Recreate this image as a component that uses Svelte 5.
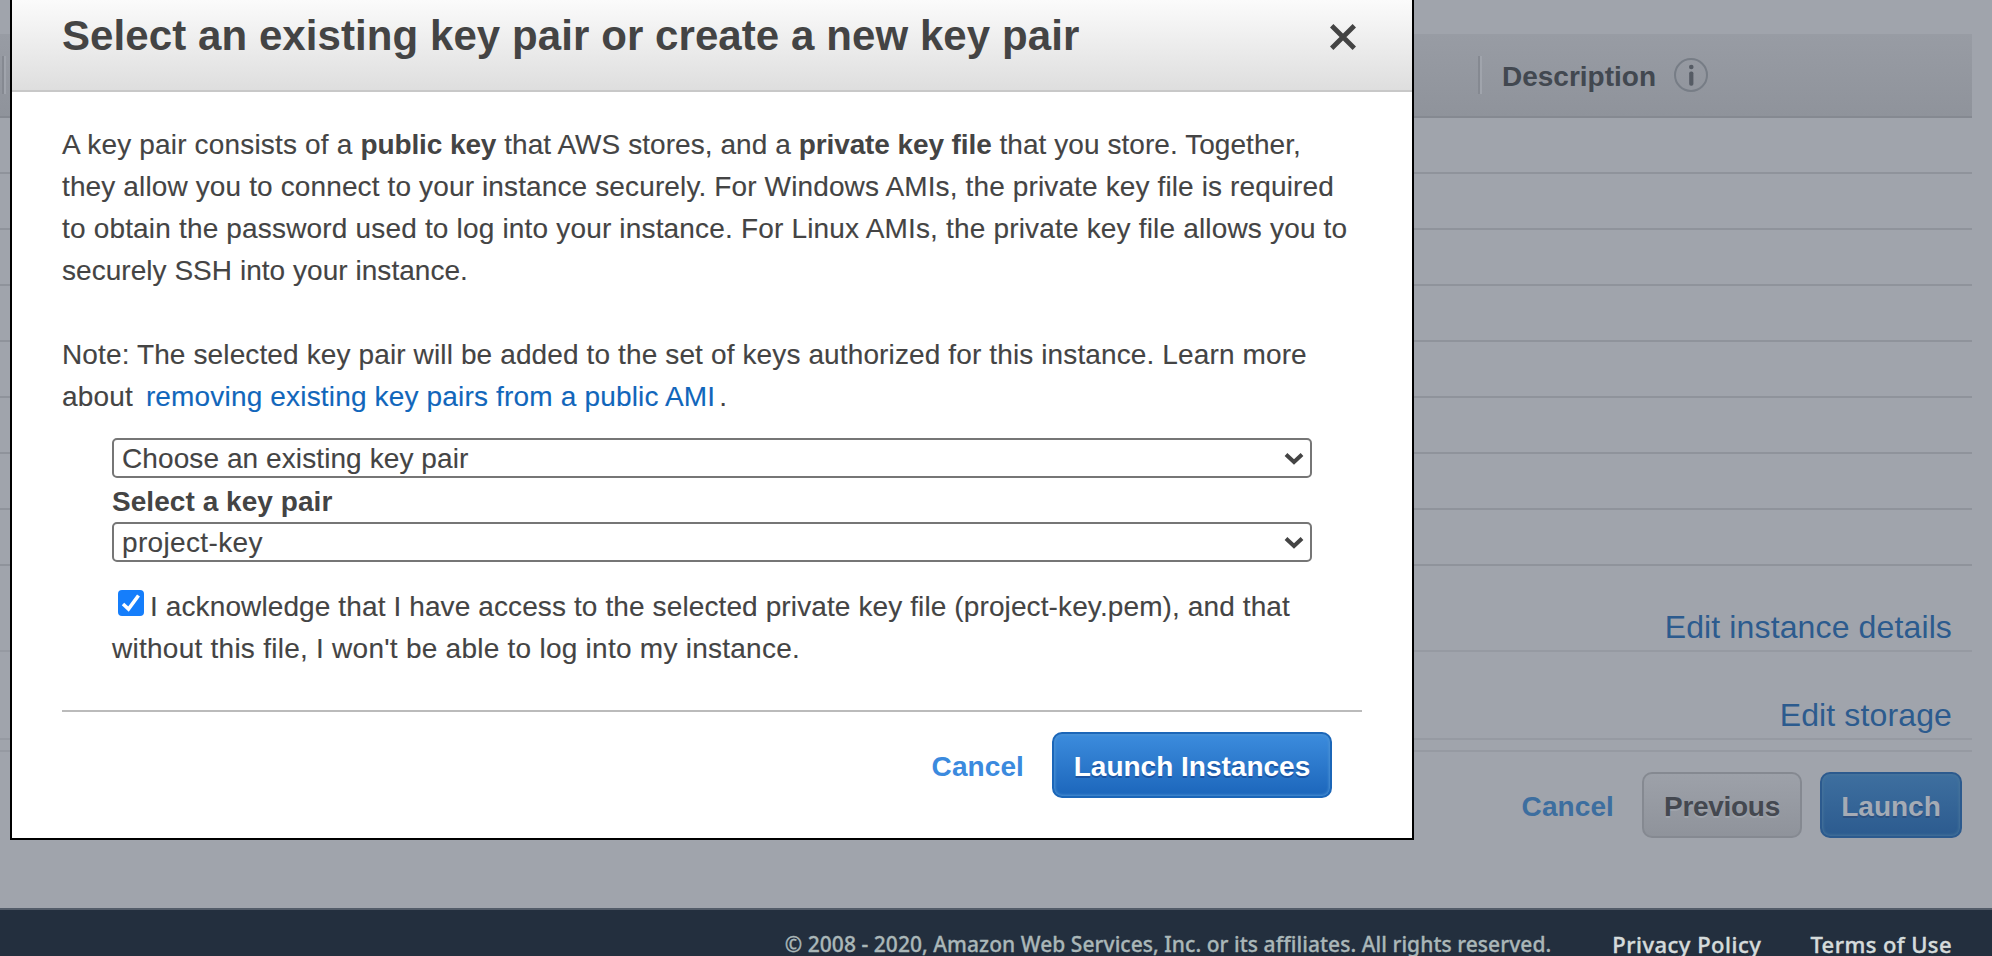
<script>
  const rules = Array.from({ length: 8 }, (_, i) => i);
</script>

<div class="page">
  <div class="content">
    <div class="thead">
      <span class="sep first"></span>
      <span class="sep second"></span>
      <span class="desc">Description</span>
      <svg class="info" width="36" height="36" viewBox="0 0 36 36">
        <circle cx="18" cy="18" r="16" fill="none" stroke="#777d86" stroke-width="2" />
        <circle cx="18.3" cy="10" r="2.3" fill="#555b64" />
        <rect x="16.2" y="14.4" width="4.2" height="14.4" rx="1.8" fill="#555b64" />
      </svg>
    </div>
    {#each rules as r (r)}
      <div class="row"></div>
    {/each}
    <div class="section details"><a class="edit" style:letter-spacing="0.13px">Edit instance details</a></div>
    <div class="section storage"><a class="edit" style:letter-spacing="0.13px">Edit storage</a></div>
    <div class="actions">
      <span class="cancel">Cancel</span>
      <span class="btn grey">Previous</span>
      <span class="btn dim">Launch</span>
    </div>
  </div>
  <footer>
    <span class="copy">© 2008 - 2020, Amazon Web Services, Inc. or its affiliates. All rights reserved.</span>
    <span class="flink">Privacy Policy</span>
    <span class="flink terms">Terms of Use</span>
  </footer>

  <div class="modal">
    <header>
      <h2>Select an existing key pair or create a new key pair</h2>
      <svg width="30" height="30" viewBox="0 0 30 30">
        <path d="M3.7 3.7L26.3 26.3M26.3 3.7L3.7 26.3" stroke="#444" stroke-width="4.8" stroke-linecap="butt" fill="none" />
      </svg>
    </header>
    <div class="body">
      <p>
        <span style:letter-spacing="0.17px">A key pair consists of a{' '}</span><b>public key</b><span style:letter-spacing="0.06px">{' '}that AWS stores, and a{' '}</span><b>private key file</b><span style:letter-spacing="0.06px">{' '}that you store. Together,</span><br />
        <span style:letter-spacing="0.13px">they allow you to connect to your instance securely. For Windows AMIs, the private key file is required</span><br />
        <span style:letter-spacing="0.175px">to obtain the password used to log into your instance. For Linux AMIs, the private key file allows you to</span><br />
        <span style:letter-spacing="0.04px">securely SSH into your instance.</span>
      </p>
      <p class="note">
        <span style:letter-spacing="0.125px">Note: The selected key pair will be added to the set of keys authorized for this instance. Learn more</span><br />
        <span style:letter-spacing="0.17px">about <a class="link">removing existing key pairs from a public AMI</a>.</span>
      </p>
      <div class="form">
        <div class="select">
          <span style:letter-spacing="0.09px">Choose an existing key pair</span>
          <svg width="20" height="14" viewBox="0 0 20 14"><path d="M2 2.5L10 10L18 2.5" fill="none" stroke="#444" stroke-width="4" /></svg>
        </div>
        <div class="label">Select a key pair</div>
        <div class="select">
          <span style:letter-spacing="0.35px">project-key</span>
          <svg width="20" height="14" viewBox="0 0 20 14"><path d="M2 2.5L10 10L18 2.5" fill="none" stroke="#444" stroke-width="4" /></svg>
        </div>
        <div class="ack">
          <div class="ackline">
            <svg class="check" width="26" height="26" viewBox="0 0 26 26">
              <rect width="26" height="26" rx="4" fill="#157efb" />
              <path d="M5 14L10.5 19L20.5 5.5" fill="none" stroke="#fff" stroke-width="3.6" />
            </svg>
            <span style:letter-spacing="0.113px">I acknowledge that I have access to the selected private key file (project-key.pem), and that</span>
          </div>
          <div style:letter-spacing="0.254px">without this file, I won't be able to log into my instance.</div>
        </div>
      </div>
      <div class="foot">
        <span class="cancel">Cancel</span>
        <span class="btn blue">Launch Instances</span>
      </div>
    </div>
  </div>
</div>

<style>
  :global(body) { margin: 0; overflow: hidden; }
  * { box-sizing: border-box; }
  .page {
    position: relative; width: 1992px; height: 956px; overflow: hidden;
    background: #a0a4ac; color: #444;
    font: 28px/42px "Liberation Sans", Arial, sans-serif;
    white-space: nowrap;
  }
  .content { height: 908px; padding-top: 34px; width: 1972px; }
  .thead {
    display: flex; align-items: flex-start; height: 84px;
    background: linear-gradient(#989ca4, #8f939b);
    border-bottom: 2px solid #858991;
  }
  .sep {
    width: 4px; height: 38px; margin-top: 22px;
    border-left: 2px solid #858991; border-right: 2px solid #a0a4ac;
  }
  .first { margin-left: 2px; }
  .second { margin-left: 1472px; }
  .desc { margin: 22px 0 0 20px; font-weight: bold; color: #424850; }
  .info { margin: 23px 0 0 17px; }
  .row { height: 56px; border-bottom: 2px solid #8f939b; }
  .section {
    display: flex; justify-content: flex-end; align-items: flex-end;
    padding-right: 20px; border-bottom: 2px solid #969aa2;
  }
  .details { height: 86px; }
  .storage { height: 88px; }
  .edit { font-size: 32px; line-height: 48px; color: #2c5b8e; margin-bottom: -1px; }
  .actions {
    display: flex; justify-content: flex-end; align-items: center;
    margin-top: 10px; border-top: 2px solid #969aa2;
    padding: 20px 10px 0 0; height: 88px;
  }
  .cancel { font-weight: bold; color: #3b8ade; letter-spacing: 0.1px; padding-top: 3px; }
  .btn {
    display: flex; align-items: center; justify-content: center; padding-top: 3px;
    height: 66px; border: 2px solid; border-radius: 10px; font-weight: bold;
  }
  .actions .cancel { color: #3d6e9f; margin-right: 28px; }
  .grey {
    width: 160px; margin-right: 18px; letter-spacing: -0.3px; color: #444850;
    border-color: #858991; background: linear-gradient(#9da1a9, #8f939b);
    text-shadow: 0 2px 0 #a0a4ac;
  }
  .dim {
    width: 142px; letter-spacing: 0; color: #a5abb5;
    border-color: #2c5a8e; background: linear-gradient(#3e6f9f, #2c5b8f);
    box-shadow: inset 0 0 3px 1px #47759b; text-shadow: 0 2px 0 #2e5180;
  }
  .blue {
    width: 280px; color: #fff; border-color: #1b66b8;
    background: linear-gradient(#3c8cdd, #1c66bb);
    box-shadow: inset 0 0 3px 1px #4c93d5; text-shadow: 0 2px 0 #1b54a2;
  }
  footer {
    display: flex; height: 48px; padding: 14px 40px 0 0; justify-content: flex-end;
    background: #232f3e; border-top: 2px solid #535c69;
    font: 500 21px/40px "Noto Sans", sans-serif; color: #aab7b8;
    -webkit-text-stroke: 0.3px currentColor;
  }
  .copy { letter-spacing: 0.05px; margin-right: 61px; }
  .flink { font-size: 22px; letter-spacing: 0.5px; color: #d5dbdb; -webkit-text-stroke-width: 0.4px; }
  .terms { margin-left: 49px; letter-spacing: 0.42px; }

  .modal {
    position: absolute; left: 10px; top: -2px; width: 1404px; height: 842px;
    background: #fff; border: 2px solid #000;
  }
  header {
    display: flex; justify-content: space-between; align-items: flex-start;
    height: 92px; padding: 0 54px 0 50px;
    background: linear-gradient(#fbfbfb, #dedede); border-bottom: 2px solid #c8c8c8;
  }
  h2 { margin: 6px 0 0 0; font-size: 42px; line-height: 60px; letter-spacing: 0.08px; }
  header svg { margin-top: 22px; }
  .body { padding: 32px 50px 0; }
  p, .select span, .ack { -webkit-text-stroke: 0.12px currentColor; }
  p { margin: 0; }
  b { letter-spacing: -0.1px; -webkit-text-stroke-width: 0; }
  .note { margin-top: 42px; }
  .link { color: #1166bb; margin: 0 4px 0 5px; }
  .form { padding: 20px 50px 0; }
  .select {
    display: flex; align-items: center; justify-content: space-between;
    height: 40px; border: 2px solid #767676; border-radius: 5px; padding: 0 6px 0 8px;
  }
  .select span { line-height: 34px; padding-top: 2px; }
  .select svg { margin-top: 1px; }
  .label { height: 44px; line-height: 48px; font-weight: bold; letter-spacing: 0.05px; }
  .ack { margin-top: 24px; }
  .ackline { display: flex; }
  .check { margin: 4px 6px 0 6px; }
  .foot {
    display: flex; justify-content: flex-end; align-items: center;
    margin-top: 40px; border-top: 2px solid #bbb; padding: 20px 30px 0 0;
  }
  .foot .cancel { margin-right: 28px; }
</style>
